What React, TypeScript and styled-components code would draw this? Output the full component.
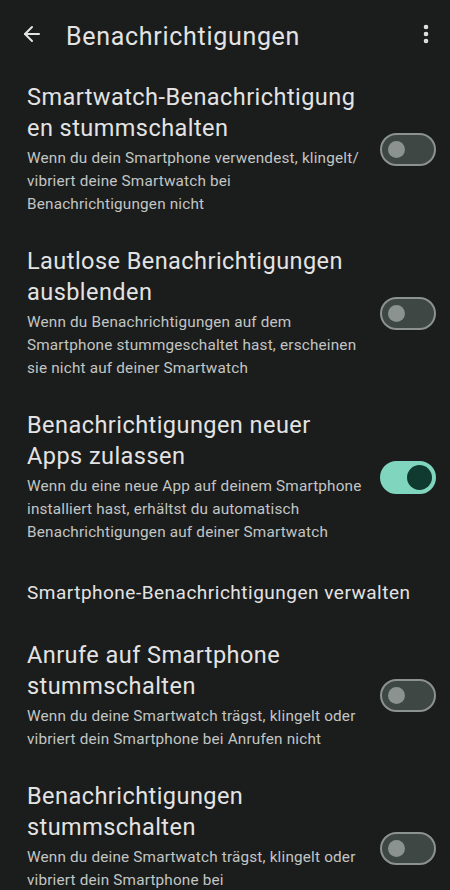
import styled, { createGlobalStyle } from 'styled-components'
import { ArrowLeft, EllipsisVertical } from 'lucide-react'

const GlobalStyle = createGlobalStyle`
  html, body {
    margin: 0;
    padding: 0;
    background: #1b1c1c;
  }
  body {
    font-family: Roboto, "Noto Sans", sans-serif;
    -webkit-font-smoothing: antialiased;
  }
`

const Screen = styled.div`
  width: 450px;
  min-height: 890px;
  background: #1b1c1c;
  color: #e3e3e3;
  overflow: hidden;
`

const TopBar = styled.header`
  height: 67px;
  display: flex;
  align-items: center;
  padding: 0 10px 0 18px;
  box-sizing: border-box;
`

const IconButton = styled.button`
  width: 28px;
  height: 28px;
  padding: 0;
  border: 0;
  background: transparent;
  color: #e3e3e3;
  display: flex;
  align-items: center;
  justify-content: center;
  cursor: pointer;
`

const Title = styled.h1`
  flex: 1;
  margin: 6px 0 0 20px;
  font-size: 25px;
  font-weight: 400;
  letter-spacing: 0.7px;
  color: #e3e3e3;
`

const List = styled.div`
  display: flex;
  flex-direction: column;
`

const Row = styled.div`
  display: flex;
  align-items: center;
  padding: 15px 14px 15px 27px;
  gap: 17px;
`

const Texts = styled.div`
  flex: 1;
  min-width: 0;
`

const RowTitle = styled.div`
  font-size: 23.5px;
  line-height: 31px;
  letter-spacing: 0.45px;
  color: #e3e3e3;
  margin-bottom: 3px;
`

const RowSub = styled.div`
  font-size: 15.3px;
  line-height: 23px;
  letter-spacing: 0.18px;
  color: #c2c6c4;
`

const Section = styled.div`
  padding: 0 27px;
  height: 66px;
  display: flex;
  align-items: center;
  font-size: 19px;
  letter-spacing: 0.5px;
  color: #e3e3e3;
`

const Track = styled.div<{ $on: boolean }>`
  flex: none;
  width: 56px;
  height: 33px;
  box-sizing: border-box;
  border-radius: 17px;
  border: 2px solid ${p => (p.$on ? '#80d5be' : '#8b928f')};
  background: ${p => (p.$on ? '#80d5be' : '#3e4744')};
  display: flex;
  align-items: center;
  justify-content: ${p => (p.$on ? 'flex-end' : 'flex-start')};
  padding: 0 ${p => (p.$on ? '2px' : '6px')};
`

const Thumb = styled.div<{ $on: boolean }>`
  width: ${p => (p.$on ? '25px' : '17px')};
  height: ${p => (p.$on ? '25px' : '17px')};
  border-radius: 50%;
  background: ${p => (p.$on ? '#103a30' : '#8b928f')};
`

type Item = { title: React.ReactNode; sub: string; on: boolean }

const first: Item[] = [
  {
    title: <>Smartwatch-Benachrichtigung<br />en stummschalten</>,
    sub: 'Wenn du dein Smartphone verwendest, klingelt/ vibriert deine Smartwatch bei Benachrichtigungen nicht',
    on: false,
  },
  {
    title: 'Lautlose Benachrichtigungen ausblenden',
    sub: 'Wenn du Benachrichtigungen auf dem Smartphone stummgeschaltet hast, erscheinen sie nicht auf deiner Smartwatch',
    on: false,
  },
  {
    title: 'Benachrichtigungen neuer Apps zulassen',
    sub: 'Wenn du eine neue App auf deinem Smartphone installiert hast, erhältst du automatisch Benachrichtigungen auf deiner Smartwatch',
    on: true,
  },
]

const second: Item[] = [
  {
    title: 'Anrufe auf Smartphone stummschalten',
    sub: 'Wenn du deine Smartwatch trägst, klingelt oder vibriert dein Smartphone bei Anrufen nicht',
    on: false,
  },
  {
    title: 'Benachrichtigungen stummschalten',
    sub: 'Wenn du deine Smartwatch trägst, klingelt oder vibriert dein Smartphone bei Benachrichtigungen nicht',
    on: false,
  },
]

const SettingRow = ({ item }: { item: Item }) => (
  <Row>
    <Texts>
      <RowTitle>{item.title}</RowTitle>
      <RowSub>{item.sub}</RowSub>
    </Texts>
    <Track $on={item.on}>
      <Thumb $on={item.on} />
    </Track>
  </Row>
)

const App = () => {
  return (
    <Screen>
      <GlobalStyle />
      <TopBar>
        <IconButton aria-label="Zurück">
          <ArrowLeft size={24} strokeWidth={2} />
        </IconButton>
        <Title>Benachrichtigungen</Title>
        <IconButton aria-label="Mehr">
          <EllipsisVertical size={24} strokeWidth={2.6} />
        </IconButton>
      </TopBar>
      <List>
        {first.map((it, i) => (
          <SettingRow key={i} item={it} />
        ))}
        <Section>Smartphone-Benachrichtigungen verwalten</Section>
        {second.map((it, i) => (
          <SettingRow key={i} item={it} />
        ))}
      </List>
    </Screen>
  )
}

export default App
